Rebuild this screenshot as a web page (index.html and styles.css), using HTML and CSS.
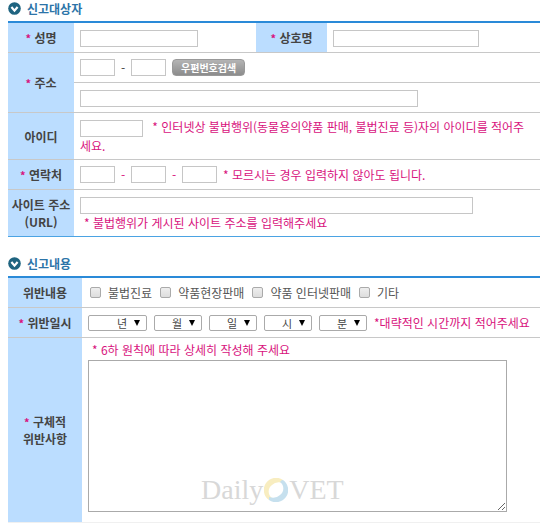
FILE: index.html
```html
<!DOCTYPE html>
<html lang="ko">
<head>
    <meta charset="UTF-8">
    <meta name="viewport" content="width=device-width, initial-scale=1.0">
    <title>신고하기</title>
    <link rel="stylesheet" href="styles.css">
</head>
<body>
    <form>
        <!-- 신고대상자 -->
        <h2 class="section-title">
            <svg class="title-icon" viewBox="0 0 13 13" aria-hidden="true">
                <circle cx="6.5" cy="6.5" r="6.3" fill="#1f6480"/>
                <path d="M3.4 5l3.1 3.6L9.6 5" fill="none" stroke="#fff" stroke-width="2.2"/>
            </svg>
            신고대상자
        </h2>
        <table class="form-table target-table">
            <colgroup>
                <col class="col-label">
                <col class="col-name">
                <col class="col-shop">
                <col>
            </colgroup>
            <tr>
                <th><span class="star">*</span> <label for="name">성명</label></th>
                <td><input type="text" id="name" class="w-name"></td>
                <th><span class="star">*</span> <label for="shop">상호명</label></th>
                <td><input type="text" id="shop" class="w-shop"></td>
            </tr>
            <tr>
                <th rowspan="2"><span class="star">*</span> <label for="zip1">주소</label></th>
                <td colspan="3">
                    <div class="field-row">
                        <input type="text" id="zip1" class="w-short">
                        <span class="dash">-</span>
                        <input type="text" class="w-short" aria-label="우편번호 뒷자리">
                        <button type="button" class="zip-button">우편번호검색</button>
                    </div>
                </td>
            </tr>
            <tr>
                <td colspan="3"><input type="text" class="w-address" aria-label="상세 주소"></td>
            </tr>
            <tr class="tall">
                <th><label for="userid">아이디</label></th>
                <td colspan="3" class="note">
                    <input type="text" id="userid" class="w-id">
                    * 인터넷상 불법행위(동물용의약품 판매, 불법진료 등)자의 아이디를 적어주세요.
                </td>
            </tr>
            <tr>
                <th><span class="star">*</span> <label for="tel1">연락처</label></th>
                <td colspan="3">
                    <div class="field-row note">
                        <input type="text" id="tel1" class="w-short">
                        <span class="dash">-</span>
                        <input type="text" class="w-short" aria-label="연락처 가운데 자리">
                        <span class="dash">-</span>
                        <input type="text" class="w-short" aria-label="연락처 끝자리">
                        <span>* 모르시는 경우 입력하지 않아도 됩니다.</span>
                    </div>
                </td>
            </tr>
            <tr class="tall">
                <th><label for="url">사이트 주소<br>(URL)</label></th>
                <td colspan="3">
                    <input type="text" id="url" class="w-url">
                    <p class="note">* 불법행위가 게시된 사이트 주소를 입력해주세요</p>
                </td>
            </tr>
        </table>

        <!-- 신고내용 -->
        <h2 class="section-title">
            <svg class="title-icon" viewBox="0 0 13 13" aria-hidden="true">
                <circle cx="6.5" cy="6.5" r="6.3" fill="#1f6480"/>
                <path d="M3.4 5l3.1 3.6L9.6 5" fill="none" stroke="#fff" stroke-width="2.2"/>
            </svg>
            신고내용
        </h2>
        <table class="form-table content-table">
            <colgroup>
                <col class="col-label">
                <col>
            </colgroup>
            <tr>
                <th>위반내용</th>
                <td>
                    <div class="check-row">
                        <label><input type="checkbox">불법진료</label>
                        <label><input type="checkbox">약품현장판매</label>
                        <label><input type="checkbox">약품 인터넷판매</label>
                        <label><input type="checkbox">기타</label>
                    </div>
                </td>
            </tr>
            <tr>
                <th><span class="star">*</span> <label for="year">위반일시</label></th>
                <td>
                    <div class="date-row note">
                        <select id="year" class="w-year"><option>년</option></select>
                        <select aria-label="월"><option>월</option></select>
                        <select aria-label="일"><option>일</option></select>
                        <select aria-label="시"><option>시</option></select>
                        <select aria-label="분"><option>분</option></select>
                        <span>*대략적인 시간까지 적어주세요</span>
                    </div>
                </td>
            </tr>
            <tr class="detail">
                <th>
                    <span class="star">*</span> <label for="detail">구체적</label><br>
                    <label for="detail">위반사항</label>
                </th>
                <td>
                    <p class="note">* 6하 원칙에 따라 상세히 작성해 주세요</p>
                    <div class="detail-box">
                        <textarea id="detail"></textarea>
                        <div class="watermark">
                            <span>Daily</span>
                            <svg viewBox="0 0 24 24" aria-hidden="true">
                                <path d="M19 2A12 12 0 0 0 5 22Q7 22 8 20A8 8 0 0 1 8 7Q12 3 19 5z" fill="#f8edc0"/>
                                <path d="M5 22A12 12 0 0 0 19 2Q17 2 16 4A8 8 0 0 1 16 17Q12 21 5 19z" fill="#c6e0ee"/>
                            </svg>
                            <span>VET</span>
                        </div>
                    </div>
                </td>
            </tr>
        </table>
    </form>
</body>
</html>
```
FILE: styles.css
```css
* {
    box-sizing: border-box;
}

body {
    margin: 0 10px 0 8px;
    background-color: #fff;
    color: #444;
    font-family: "Noto Sans CJK KR", sans-serif;
    font-size: 12px;
    line-height: 17px;
}

p {
    margin: 0;
}

.section-title {
    display: flex;
    align-items: center;
    gap: 6px;
    height: 17px;
    margin: 0 0 4px;
    color: #2c74a8;
    font-size: 12px;
    line-height: 17px;
}

.title-icon {
    width: 13px;
    height: 13px;
}

/* 표 */
.form-table {
    width: 100%;
    table-layout: fixed;
    border-spacing: 0;
    border-top: 2px solid #2a8ad8;
}

.form-table th,
.form-table td {
    height: 30px;
    padding: 0 6px;
    border-bottom: 1px solid #c8c8c8;
    text-align: left;
}

.form-table th {
    padding: 0;
    background-color: #bbddff;
    text-align: center;
}

.form-table .tall th,
.form-table .tall td {
    height: 47px;
}

.target-table {
    margin-bottom: 18px;
}

.target-table tr:last-child > * {
    border-bottom-color: #4ba3e3;
}

.target-table .col-label {
    width: 66px;
}

.col-name {
    width: 182px;
}

.col-shop {
    width: 71px;
}

.content-table .col-label {
    width: 74px;
}

.form-table .detail > * {
    border-bottom-color: #f0f0f0;
}

.form-table .detail td {
    padding: 3px 6px 10px;
}

.note,
.star {
    color: #d8127d;
}

.star {
    font-size: 11px;
    line-height: 1;
}

p.note {
    padding-left: 4px;
}

/* 입력 요소 */
input[type="text"] {
    height: 17px;
    max-width: 100%;
    margin: 0;
    padding: 0 2px;
    border: 1px solid #c6c6c6;
    background-color: #fff;
    font: inherit;
    vertical-align: middle;
}

.w-name {
    width: 118px;
}

.w-shop {
    width: 146px;
}

.w-short {
    width: 35px;
}

.w-address {
    width: 338px;
}

.form-table .w-id {
    width: 63px;
    margin-right: 6px;
}

.w-url {
    width: 393px;
}

.field-row,
.date-row,
.check-row {
    display: flex;
    align-items: center;
    gap: 6px;
    white-space: nowrap;
}

.dash {
    width: 4px;
    text-align: center;
}

.zip-button {
    height: 17px;
    padding: 0 8px;
    border: 1px solid #999;
    border-radius: 4px;
    background: linear-gradient(#b4b4b4, #8c8c8c);
    color: #fff;
    font: bold 10px/15px "Noto Sans CJK KR", sans-serif;
}

.check-row {
    gap: 8px;
    padding-left: 2px;
    color: #555;
}

.check-row label {
    display: flex;
    align-items: center;
    gap: 7px;
}

.check-row input {
    appearance: none;
    width: 11px;
    height: 11px;
    margin: 0;
    border: 1px solid #aaa;
    border-radius: 2px;
    background: linear-gradient(#eee, #ddd);
}

.check-row input:checked {
    background: #2a8ad8;
}

.date-row {
    gap: 7px;
}

select {
    appearance: none;
    width: 48px;
    height: 16px;
    padding: 0 19px 0 4px;
    border: 1px solid #aaa;
    border-radius: 2px;
    background: #fff url("data:image/svg+xml,%3Csvg xmlns='http://www.w3.org/2000/svg' viewBox='0 0 6 6'%3E%3Cpath d='M0 0h6L3 6z'/%3E%3C/svg%3E") no-repeat right 6px center / 6px 6px;
    color: #444;
    font: 11px/14px "Noto Sans CJK KR", sans-serif;
    text-align-last: right;
}

.w-year {
    width: 59px;
}

.detail-box {
    position: relative;
    margin-top: 2px;
}

textarea {
    display: block;
    width: 419px;
    max-width: 100%;
    height: 152px;
    padding: 4px;
    border: 1px solid #aaa;
    font: inherit;
}

/* 입력창 위에 겹치는 로고 */
.watermark {
    position: absolute;
    bottom: 6px;
    left: 113px;
    display: flex;
    align-items: center;
    gap: 1px;
    color: #d8d8d8;
    font: 28px/32px "Liberation Serif", serif;
    pointer-events: none;
}

.watermark svg {
    width: 24px;
    height: 24px;
}
```
